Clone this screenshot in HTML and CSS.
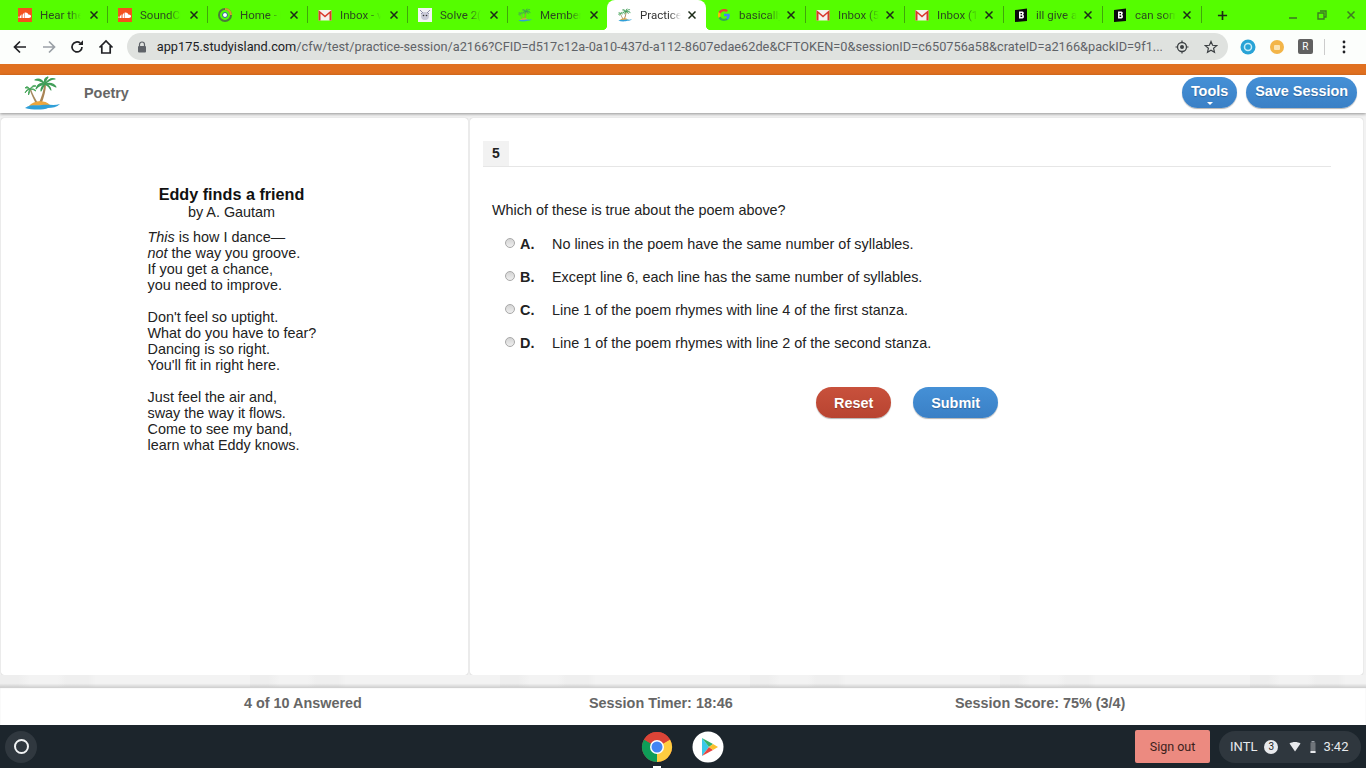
FILE: index.html
```html
<!DOCTYPE html>
<html lang="en">
<head>
<meta charset="utf-8">
<title>Practice Session</title>
<link rel="stylesheet" href="styles.css">
</head>
<body>
<svg class="defs" width="0" height="0" aria-hidden="true">
  <symbol id="sc" viewBox="0 0 14 14"><rect width="14" height="14" fill="#f4511e"/><path d="M1 10V8.500M2.500 10V7.500M4 10V6.500M5.500 10V5.500" stroke="#fff" stroke-width="1"/><path d="M6.500 10V4.800C8 4 10 5 10.300 6.500C11.800 6.300 13 7.200 13 8.300C13 9.300 12.200 10 11 10Z" fill="#fff"/></symbol>
  <symbol id="gm" viewBox="0 0 14 14"><rect x="0.500" y="2" width="13" height="10.500" fill="#f5f0ee"/><path d="M0.500 12.500V2L7 7.500L13.500 2V12.500H11.500V5.500L7 9.500L2.500 5.500V12.500Z" fill="#d9372b"/></symbol>
  <symbol id="palm" viewBox="0 0 36 34">
    <path d="M20 8C20 14 17.500 21 14.500 28H17.500C20 21 22 14 22 8Z" fill="#a98455"/>
    <path d="M5.500 13C7 18 9.500 23 12 28H14.500C11.500 23 8.500 18 7 13Z" fill="#a5895f"/>
    <g fill="#3f9d57" stroke="#3f9d57" stroke-width="1.100" stroke-linejoin="round">
      <path d="M21 8Q16 1 11 4Q16 4 21 8Z"/>
      <path d="M21 8Q14 6 12 13Q15 9 21 8Z"/>
      <path d="M21 8Q19 2 24 1Q22 3 21 8Z"/>
      <path d="M21 8Q26 1 31 3Q26 3 21 8Z"/>
      <path d="M21 8Q29 6 32 11Q27 8 21 8Z"/>
      <path d="M21 8Q26 9 27 14Q25 10 21 8Z"/>
      <path d="M21 8Q17 10 17 15Q19 11 21 8Z"/>
    </g>
    <g fill="#4aa65c" stroke="#4aa65c" stroke-width="0.900" stroke-linejoin="round">
      <path d="M6 13Q3 9 1 12Q3 11.500 6 13Z"/>
      <path d="M6 13Q2 13 1 17Q3 14 6 13Z"/>
      <path d="M6 13Q9 8 12 10Q9 10 6 13Z"/>
      <path d="M6 13Q10 12 12 15Q9 13 6 13Z"/>
      <path d="M6 13Q4 16 4.500 19Q6 16 6 13Z"/>
    </g>
    <path d="M5 30C9 25 20 23 26 29Z" fill="#eda63c"/>
    <path d="M1 32C6 28 12 30 18 29C24 28 30 30 36 28C33 31 28 32 24 32C20 34 8 34 1 32Z" fill="#2f9fd8"/>
  </symbol>
  <symbol id="bly" viewBox="0 0 14 14"><path d="M1 2L13 0.500V13L1 14Z" fill="#0a0a0a"/><path d="M5 3.500H8.500C10 3.500 10.300 6 9 6.800C10.500 7.300 10.300 10.500 8.500 10.500H5ZM6.500 5V6.300H8V5ZM6.500 7.500V9H8.200V7.500Z" fill="#fff"/></symbol>
  <symbol id="close" viewBox="0 0 8 8"><path d="M0.500 0.500L7.500 7.500M7.500 0.500L0.500 7.500" stroke="#1c2b18" stroke-width="1.500"/></symbol>
</svg>

<div class="tabstrip">
  <div class="tab"><svg class="fav"><use href="#sc"/></svg><span class="tab-title">Hear the</span><svg class="tab-x"><use href="#close"/></svg></div>
  <div class="tab"><svg class="fav"><use href="#sc"/></svg><span class="tab-title">SoundCl</span><svg class="tab-x"><use href="#close"/></svg></div>
  <div class="tab"><svg class="fav" viewBox="0 0 14 14"><circle cx="7" cy="7" r="6" fill="none" stroke="#4b7a3a" stroke-width="2"/><path d="M7 1A6 6 0 0 1 13 7" fill="none" stroke="#d4a22c" stroke-width="2"/><circle cx="7" cy="7" r="2.500" fill="#fff" stroke="#2e6b8a"/></svg><span class="tab-title">Home - F</span><svg class="tab-x"><use href="#close"/></svg></div>
  <div class="tab"><svg class="fav"><use href="#gm"/></svg><span class="tab-title">Inbox - v</span><svg class="tab-x"><use href="#close"/></svg></div>
  <div class="tab"><svg class="fav" viewBox="0 0 14 14"><rect width="14" height="14" fill="#f3f3f3"/><circle cx="7" cy="8" r="4" fill="#c9c9d6"/><path d="M2 2L5 5M12 2L9 5M3 6L5 4M11 6L9 4" stroke="#8e8ea8"/><circle cx="5.500" cy="7.500" r="0.800" fill="#333"/><circle cx="8.500" cy="7.500" r="0.800" fill="#333"/></svg><span class="tab-title">Solve 2(</span><svg class="tab-x"><use href="#close"/></svg></div>
  <div class="tab tab-plain"><svg class="fav"><use href="#palm"/></svg><span class="tab-title">Member</span><svg class="tab-x"><use href="#close"/></svg></div>
  <div class="tab tab-active"><svg class="fav"><use href="#palm"/></svg><span class="tab-title">Practice</span><svg class="tab-x"><use href="#close"/></svg></div>
  <div class="tab tab-late"><svg class="fav" viewBox="0 0 14 14"><path d="M12.800 7.100C12.800 6.600 12.800 6.200 12.700 5.800H7V8.300H10.300C10.100 9.100 9.700 9.700 9 10.200V11.800H11C12.200 10.700 12.800 9.100 12.800 7.100Z" fill="#4285f4"/><path d="M7 13C8.600 13 10 12.500 11 11.800L9 10.200C8.500 10.600 7.800 10.800 7 10.800C5.400 10.800 4.100 9.800 3.600 8.400H1.600V10C2.600 11.800 4.600 13 7 13Z" fill="#34a853"/><path d="M3.600 8.400C3.300 7.500 3.300 6.500 3.600 5.600V4H1.600C0.800 5.800 0.800 8.200 1.600 10Z" fill="#fbbc05"/><path d="M7 3.200C7.900 3.200 8.700 3.500 9.300 4.100L11 2.400C10 1.500 8.600 1 7 1C4.600 1 2.600 2.200 1.600 4L3.600 5.600C4.100 4.200 5.400 3.200 7 3.200Z" fill="#ea4335"/></svg><span class="tab-title">basically</span><svg class="tab-x"><use href="#close"/></svg></div>
  <div class="tab tab-late"><svg class="fav"><use href="#gm"/></svg><span class="tab-title">Inbox (5</span><svg class="tab-x"><use href="#close"/></svg></div>
  <div class="tab tab-late"><svg class="fav"><use href="#gm"/></svg><span class="tab-title">Inbox (1</span><svg class="tab-x"><use href="#close"/></svg></div>
  <div class="tab tab-late"><svg class="fav"><use href="#bly"/></svg><span class="tab-title">ill give a</span><svg class="tab-x"><use href="#close"/></svg></div>
  <div class="tab tab-late"><svg class="fav"><use href="#bly"/></svg><span class="tab-title">can som</span><svg class="tab-x"><use href="#close"/></svg></div>
  <svg class="newtab" viewBox="0 0 12 12"><path d="M6 1V11M1 6H11" stroke="#1c2b18" stroke-width="1.800"/></svg>
  <div class="winctl">
    <svg class="winbtn" viewBox="0 0 10 10"><path d="M1 8H9" stroke="#3d7a24" stroke-width="1.600"/></svg>
    <svg class="winbtn" viewBox="0 0 10 10"><path d="M3 1H9V7H7M1 3H7V9H1Z" fill="none" stroke="#3d7a24" stroke-width="1.400"/></svg>
    <svg class="winbtn" viewBox="0 0 10 10"><path d="M1.500 1.500L8.500 8.500M8.500 1.500L1.500 8.500" stroke="#3d7a24" stroke-width="1.500"/></svg>
  </div>
</div>

<div class="toolbar">
  <svg class="nav" viewBox="0 0 16 16"><path d="M14 8H3M8 2.500L2.500 8L8 13.500" fill="none" stroke="#202124" stroke-width="1.700"/></svg>
  <svg class="nav" viewBox="0 0 16 16"><path d="M2 8H13M8 2.500L13.500 8L8 13.500" fill="none" stroke="#9aa0a6" stroke-width="1.700"/></svg>
  <svg class="nav" viewBox="0 0 16 16"><path d="M13 8A5 5 0 1 1 11.300 4.200" fill="none" stroke="#202124" stroke-width="1.700"/><path d="M9.300 6H14V1.300Z" fill="#202124"/></svg>
  <svg class="nav" viewBox="0 0 16 16"><path d="M1.500 8.500L8 2L14.500 8.500M3.800 7V14H12.200V7" fill="none" stroke="#202124" stroke-width="1.700"/></svg>
  <div class="omnibox">
    <svg class="lock" viewBox="0 0 10 12"><path d="M2.500 5V3.500A2.500 2.500 0 0 1 7.500 3.500V5" fill="none" stroke="#5f6368" stroke-width="1.200"/><rect x="1" y="5" width="8" height="6.500" rx="1" fill="#5f6368"/></svg>
    <span class="url"><span class="url-host">app175.studyisland.com</span>/cfw/test/practice-session/a2166?CFID=d517c12a-0a10-437d-a112-8607edae62de&amp;CFTOKEN=0&amp;sessionID=c650756a58&amp;crateID=a2166&amp;packID=9f1...</span>
    <svg class="omni-ic" viewBox="0 0 14 14"><circle cx="7" cy="7" r="4.500" fill="none" stroke="#3c4043" stroke-width="1.300"/><circle cx="7" cy="7" r="2" fill="#3c4043"/><path d="M7 0.500V2.500M7 11.500V13.500M0.500 7H2.500M11.500 7H13.500" stroke="#3c4043" stroke-width="1.200"/></svg>
    <svg class="omni-ic" viewBox="0 0 14 14"><path d="M7 1.500L8.600 5.300L12.700 5.600L9.600 8.300L10.500 12.300L7 10.200L3.500 12.300L4.400 8.300L1.300 5.600L5.400 5.300Z" fill="none" stroke="#3c4043" stroke-width="1.200"/></svg>
  </div>
  <div class="extensions">
    <svg class="ext" viewBox="0 0 16 16"><circle cx="8" cy="8" r="7.500" fill="#29a3d6"/><circle cx="8" cy="8" r="3.500" fill="none" stroke="#c8ecf7" stroke-width="1.500"/></svg>
    <svg class="ext" viewBox="0 0 16 16"><circle cx="8" cy="8" r="7" fill="#f3b548"/><rect x="5" y="6" width="6" height="5" rx="1" fill="#fbe3b0"/></svg>
    <span class="ext-r">R</span>
    <span class="ext-sep"></span>
    <svg class="kebab" viewBox="0 0 4 14"><circle cx="2" cy="2" r="1.400" fill="#202124"/><circle cx="2" cy="7" r="1.400" fill="#202124"/><circle cx="2" cy="12" r="1.400" fill="#202124"/></svg>
  </div>
</div>

<div class="orange"></div>

<header class="apphead">
  <svg class="logo"><use href="#palm"/></svg>
  <span class="apptitle">Poetry</span>
  <div class="headbtns">
    <button class="pill pill-blue pill-tools">Tools<span class="caret"></span></button>
    <button class="pill pill-blue">Save Session</button>
  </div>
</header>

<main class="stage">
  <section class="poem-panel">
    <div class="poem">
      <h1 class="poem-title">Eddy finds a friend</h1>
      <p class="poem-author">by A. Gautam</p>
      <p class="stanza"><em>This</em> is how I dance—<br><em>not</em> the way you groove.<br>If you get a chance,<br>you need to improve.</p>
      <p class="stanza">Don't feel so uptight.<br>What do you have to fear?<br>Dancing is so right.<br>You'll fit in right here.</p>
      <p class="stanza">Just feel the air and,<br>sway the way it flows.<br>Come to see my band,<br>learn what Eddy knows.</p>
    </div>
  </section>
  <section class="q-panel">
    <div class="q-head"><span class="q-num">5</span></div>
    <p class="q-text">Which of these is true about the poem above?</p>
    <div class="choices">
      <label class="choice"><span class="radio"></span><b class="letter">A.</b><span>No lines in the poem have the same number of syllables.</span></label>
      <label class="choice"><span class="radio"></span><b class="letter">B.</b><span>Except line 6, each line has the same number of syllables.</span></label>
      <label class="choice"><span class="radio"></span><b class="letter">C.</b><span>Line 1 of the poem rhymes with line 4 of the first stanza.</span></label>
      <label class="choice"><span class="radio"></span><b class="letter">D.</b><span>Line 1 of the poem rhymes with line 2 of the second stanza.</span></label>
    </div>
    <div class="q-actions">
      <button class="pill pill-red">Reset</button>
      <button class="pill pill-blue">Submit</button>
    </div>
  </section>
</main>

<div class="strip"></div>

<footer class="status">
  <span class="st st-a">4 of 10 Answered</span>
  <span class="st st-b">Session Timer: 18:46</span>
  <span class="st st-c">Session Score: 75% (3/4)</span>
</footer>

<div class="shelf">
  <span class="launcher"><span class="launcher-ring"></span></span>
  <div class="apps">
    <span class="app app-open">
      <svg class="app-ic" viewBox="0 0 32 32"><circle cx="16" cy="16" r="15" fill="#db4437"/><path d="M16 16L3 8.500A15 15 0 0 0 16 31Z" fill="#0f9d58"/><path d="M16 16L16 31A15 15 0 0 0 29 8.500Z" fill="#ffcd40"/><path d="M16 16L3 8.500A15 15 0 0 1 29 8.500Z" fill="#db4437"/><circle cx="16" cy="16" r="7" fill="#fff"/><circle cx="16" cy="16" r="5.500" fill="#4285f4"/></svg>
    </span>
    <span class="app">
      <svg class="app-ic" viewBox="0 0 32 32"><circle cx="16" cy="16" r="15.500" fill="#fff"/><path d="M10 7L17 16L10 25Z" fill="#3bc9e8"/><path d="M10 7L21 13L17 16Z" fill="#34b36b"/><path d="M10 25L21 19L17 16Z" fill="#e9453f"/><path d="M21 13L26 16L21 19L17 16Z" fill="#fbc02d"/></svg>
    </span>
  </div>
  <div class="tray">
    <span class="signout">Sign out</span>
    <div class="sysinfo">
      <span>INTL</span>
      <span class="badge">3</span>
      <svg class="wifi" viewBox="0 0 12 10"><path d="M0.500 1.500C3.500 -0.500 8.500 -0.500 11.500 1.500L6 9.500Z" fill="#e8eaed"/></svg>
      <svg class="batt" viewBox="0 0 6 12"><rect x="1.500" y="0" width="3" height="1.500" fill="#9aa0a6"/><rect x="0.500" y="1.500" width="5" height="10.500" fill="#70757a"/><rect x="0.500" y="10" width="5" height="2" fill="#e8eaed"/></svg>
      <span>3:42</span>
    </div>
  </div>
</div>
</body>
</html>
```
FILE: styles.css
```css
* { box-sizing: border-box; }
html, body { margin: 0; padding: 0; height: 768px; overflow: hidden; }
body {
  display: flex;
  flex-direction: column;
  width: 1366px;
  background: #f2f2f2;
  font-family: "Liberation Sans", Arial, sans-serif;
  color: #1f1f1f;
}
.defs { position: absolute; }

/* Browser tab strip */
.tabstrip {
  flex: 0 0 30px;
  display: flex;
  align-items: center;
  padding-left: 8px;
  background: #55fd00;
  font-family: Roboto, sans-serif;
  font-size: 11.500px;
  color: #2c4a1f;
}
.tab {
  flex: 0 0 100px;
  height: 30px;
  display: flex;
  align-items: center;
  padding: 0 10px 1px;
  position: relative;
}
.tab::after {
  content: "";
  position: absolute;
  right: 0;
  top: 6px;
  width: 1px;
  height: 17px;
  background: #3fa80a;
}
.tab-plain::after { display: none; }
.tab-late { flex-basis: 99px; padding-right: 11px; }
.tab-active {
  flex: 0 0 99px;
  margin: 0 1px 0 -1px;
  padding: 0 10px 1px 11px;
  background: #fff;
  border-radius: 8px 8px 0 0;
  color: #333;
}
.tab-active::before,
.tab-active::after {
  content: "";
  position: absolute;
  top: auto;
  bottom: 0;
  width: 5px;
  height: 5px;
}
.tab-active::before {
  left: -5px;
  background: radial-gradient(circle at 0 0, transparent 5px, #fff 5.500px);
}
.tab-active::after {
  right: -5px;
  background: radial-gradient(circle at 100% 0, transparent 5px, #fff 5.500px);
}
.fav { width: 14px; height: 14px; flex: none; }
.tab-title {
  width: 41px;
  margin-left: 8px;
  white-space: nowrap;
  overflow: hidden;
  -webkit-mask-image: linear-gradient(to right, #000 70%, transparent 100%);
  mask-image: linear-gradient(to right, #000 70%, transparent 100%);
}
.tab-x { width: 8px; height: 8px; margin-left: auto; }
.newtab { width: 11px; height: 11px; margin-left: 15px; }
.winctl {
  margin-left: auto;
  display: flex;
  gap: 19px;
  padding-right: 10px;
}
.winbtn { width: 10px; height: 10px; }

/* Browser toolbar */
.toolbar {
  flex: 0 0 34px;
  display: flex;
  align-items: center;
  padding: 0 0 1px 12px;
  background: #fcfefc;
}
.nav { width: 16px; height: 16px; flex: none; margin-right: 12.700px; }
.omnibox {
  width: 1101px;
  height: 27px;
  display: flex;
  align-items: center;
  padding: 0 10px;
  background: #dfe2df;
  border-radius: 14px;
  font-family: Roboto, sans-serif;
  font-size: 12.750px;
  color: #5f6368;
}
.lock { width: 10px; height: 12px; flex: none; margin-right: 10px; }
.url { white-space: nowrap; overflow: hidden; flex: 0 0 1005px; }
.url-host { color: #202124; }
.omni-ic { width: 14px; height: 14px; flex: none; margin-left: 13px; }
.omni-ic + .omni-ic { margin-left: 15px; }
.extensions { display: flex; align-items: center; margin-left: 12px; }
.ext { width: 16px; height: 16px; margin-right: 13px; }
.ext-r {
  width: 15px;
  height: 15px;
  background: #616161;
  color: #fff;
  font-size: 10px;
  text-align: center;
  line-height: 15px;
  border-radius: 2px;
  font-family: Roboto, sans-serif;
}
.ext-sep { width: 1px; height: 16px; background: #ccc; margin: 0 17px 0 11px; }
.kebab { width: 4px; height: 14px; }

.orange { flex: 0 0 11px; background: #e07020; }

/* App header */
.apphead {
  flex: 0 0 38px;
  display: flex;
  align-items: center;
  padding: 0 9px 3px 24px;
  background: #fff;
  box-shadow: 0 1px 3px rgba(0, 0, 0, 0.4);
  position: relative;
}
.logo { width: 36px; height: 34px; }
.apptitle { margin-left: 24px; font-size: 14.400px; font-weight: bold; color: #666; }
.headbtns { margin-left: auto; display: flex; gap: 9px; }

.pill {
  height: 31px;
  padding: 0 18px;
  border: 0;
  border-radius: 16px;
  font: bold 14.400px "Liberation Sans", Arial, sans-serif;
  color: #fff;
  text-shadow: 0 1px 1px rgba(0, 0, 0, 0.25);
}
.pill-blue { background: linear-gradient(#4590d6, #3a80c6); box-shadow: 0 1px 1px rgba(0, 0, 0, 0.3); }
.pill-red { background: linear-gradient(#c8513c, #b84431); box-shadow: 0 1px 1px rgba(0, 0, 0, 0.3); }
.headbtns .pill { padding: 0 9px 3px; }
.pill-tools { position: relative; }
.caret {
  position: absolute;
  left: 50%;
  bottom: 3px;
  margin-left: -3px;
  border: 3px solid transparent;
  border-top-color: #fff;
  border-bottom: 0;
}

/* Panels */
.stage {
  flex: 0 0 557px;
  margin-top: 5px;
  display: flex;
  gap: 2px;
  padding: 0 3px 0 1px;
}
.poem-panel {
  flex: 0 0 467px;
  background: #fff;
  border-radius: 3px;
  box-shadow: 0 0 1px rgba(0, 0, 0, 0.3);
  display: flex;
  justify-content: center;
}
.poem {
  width: 340px;
  padding-top: 67px;
  margin-left: -6px;
  font-size: 14.400px;
  line-height: 16px;
  color: #222;
}
.poem-title { margin: 0; text-align: center; font-size: 16.200px; line-height: 19px; color: #111; }
.poem-author { margin: 0 0 9px; text-align: center; }
.stanza { margin: 0 0 16px 86px; }

.q-panel {
  flex: 1;
  background: #fff;
  border-radius: 3px;
  box-shadow: 0 0 1px rgba(0, 0, 0, 0.3);
  padding: 23px 32px 0 13px;
  font-size: 14.400px;
  color: #222;
}
.q-head { height: 26px; border-bottom: 1px solid #e6e6e6; }
.q-num {
  display: block;
  width: 26px;
  height: 25px;
  background: #f2f2f2;
  font-weight: bold;
  font-size: 14px;
  line-height: 24px;
  text-align: center;
  color: #222;
}
.q-text { margin: 35px 0 0 9px; line-height: 17px; }
.choices { margin: 16px 0 0 22px; display: flex; flex-direction: column; gap: 16px; }
.choice { display: flex; align-items: center; height: 17px; }
.radio {
  width: 10px;
  height: 10px;
  border-radius: 50%;
  border: 1px solid #a8a8a8;
  background: linear-gradient(#d4d4d4, #efefef);
  margin: -2px 5px 0 0;
  flex: none;
}
.letter { flex: 0 0 32px; }
.q-actions {
  display: flex;
  gap: 22px;
  margin: 36px 0 0 333px;
}

/* Bottom */
.strip {
  flex: 0 0 12px;
  background:
    linear-gradient(rgba(0, 0, 0, 0), rgba(0, 0, 0, 0) 70%, rgba(0, 0, 0, 0.12)),
    repeating-linear-gradient(90deg, #eeeeee 0 18px, #f3f3f3 30px 58px, #efefef 66px 88px, #f3f3f3 96px 240px, #f3f3f3 250px);
}
.status {
  flex: 0 0 38px;
  display: flex;
  padding: 0 0 6px 244px;
  align-items: center;
  background: #fff;
  font-size: 14.400px;
  font-weight: bold;
  color: #666;
  box-shadow: inset 0 1px 1px rgba(0, 0, 0, 0.2);
}
.st-a { flex: 0 0 345px; }
.st-b { flex: 0 0 366px; }

.shelf {
  flex: 0 0 43px;
  display: flex;
  align-items: center;
  background: #1c252c;
  position: relative;
}
.launcher {
  width: 32px;
  height: 32px;
  margin-left: 5px;
  border-radius: 50%;
  background: #30383f;
  display: flex;
  align-items: center;
  justify-content: center;
}
.launcher-ring { width: 15px; height: 15px; border: 2px solid #f1f3f4; border-radius: 50%; }
.apps {
  position: absolute;
  left: 641px;
  top: 6px;
  display: flex;
  gap: 19px;
}
.app { width: 32px; height: 37px; display: block; position: relative; }
.app-ic { width: 32px; height: 32px; display: block; }
.app-open::after {
  content: "";
  position: absolute;
  left: 12px;
  bottom: 0;
  width: 8px;
  height: 2px;
  background: #fff;
}
.tray {
  margin-left: auto;
  display: flex;
  align-items: center;
  gap: 9px;
  padding-right: 5px;
  font-family: Roboto, sans-serif;
  font-size: 13px;
  color: #e8eaed;
}
.signout {
  width: 75px;
  height: 33px;
  background: #ec8a80;
  color: #3c1f1c;
  font-size: 12.500px;
  border-radius: 2px;
  display: flex;
  align-items: center;
  justify-content: center;
}
.sysinfo {
  width: 142px;
  height: 32px;
  border-radius: 16px;
  background: #2f373e;
  display: flex;
  align-items: center;
  padding-left: 11px;
}
.badge {
  width: 14px;
  height: 14px;
  margin-left: 7px;
  border-radius: 50%;
  background: #e8eaed;
  color: #202124;
  font-size: 10px;
  line-height: 14px;
  text-align: center;
}
.wifi { width: 12px; height: 10px; margin-left: 11px; }
.batt { width: 6px; height: 12px; margin: 0 7px 0 9px; }
```
